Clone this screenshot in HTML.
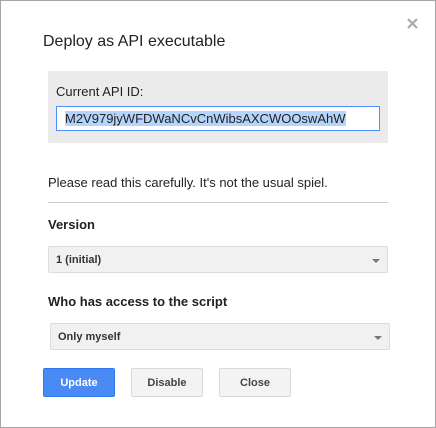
<!DOCTYPE html><html><head><style>
body{margin:0;width:436px;height:428px;background:#fff;font-family:"Liberation Sans",Arial,sans-serif;position:relative;overflow:hidden}
.b{position:absolute;left:0;top:0;width:434px;height:426px;border:1px solid #a6a6a6}
.a{position:absolute}
.sel{position:absolute;height:27px;background:#f1f1f1;border:1px solid #dcdcdc;border-radius:2px;box-sizing:border-box;font-size:11px;font-weight:bold;color:#333;line-height:26px;padding-left:7px}
.sel:after{content:"";position:absolute;right:7px;top:12px;border-left:4px solid transparent;border-right:4px solid transparent;border-top:4px solid #777}
.btn{position:absolute;top:368px;height:29px;width:72px;box-sizing:border-box;border:1px solid #d9d9d9;background:#f3f3f3;border-radius:2px;font-size:11px;font-weight:bold;color:#444;text-align:center;line-height:28px}
</style></head><body>
<div class="b"></div>
<svg class="a" style="left:407px;top:18px" width="11" height="11" viewBox="0 0 11 11"><path d="M1 1L10 10M10 1L1 10" stroke="#aaa" stroke-width="2.2"/></svg>
<div class="a" style="left:43px;top:33px;font-size:16px;color:#222">Deploy as API executable</div>
<div class="a" style="left:48px;top:71px;width:340px;height:72px;background:#ebebeb"></div>
<div class="a" style="left:56px;top:84px;font-size:13px;color:#222">Current API ID:</div>
<div class="a" style="left:56px;top:106px;width:324px;height:25px;box-sizing:border-box;border:1px solid #4d90fe;background:#fff"></div>
<div class="a" style="left:65px;top:111px;font-size:13px;color:#222;background:#b3d4fc;line-height:15px">M2V979jyWFDWaNCvCnWibsAXCWOOswAhW</div>
<div class="a" style="left:48px;top:175px;font-size:13px;color:#222">Please read this carefully. It's not the usual spiel.</div>
<div class="a" style="left:48px;top:202px;width:340px;height:1px;background:#ccc"></div>
<div class="a" style="left:48px;top:217px;font-size:13px;font-weight:bold;color:#222">Version</div>
<div class="sel" style="left:48px;top:246px;width:340px">1 (initial)</div>
<div class="a" style="left:48px;top:294px;font-size:13px;font-weight:bold;color:#222">Who has access to the script</div>
<div class="sel" style="left:50px;top:323px;width:340px">Only myself</div>
<div class="btn" style="left:43px;background:#4a8af4;border-color:#3079ed;color:#fff">Update</div>
<div class="btn" style="left:131px">Disable</div>
<div class="btn" style="left:219px">Close</div>
</body></html>
